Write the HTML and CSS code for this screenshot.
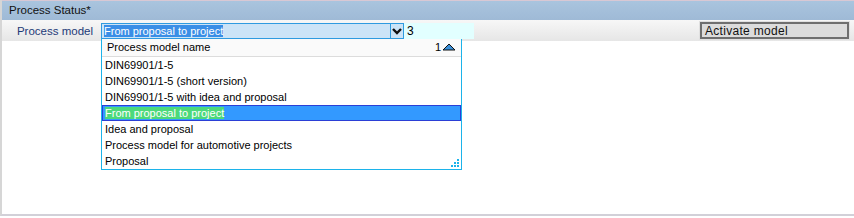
FILE: index.html
```html
<!DOCTYPE html>
<html lang="en">
  <head>
    <meta charset="UTF-8" />
    <title>Process Status</title>
    <link rel="stylesheet" href="styles.css">
  </head>
  <body>
    <div class="panel">
      <div class="panel-title">Process Status*</div>
      <div class="toolbar">
        <label class="field-label">Process model</label>
        <div class="combo">
          <div class="combo-input"><span class="sel">From proposal to project</span></div>
          <span class="combo-btn">
            <svg width="10" height="8" viewBox="0 0 10 8"><path d="M1 2 L5 6 L9 2" fill="none" stroke="#111" stroke-width="2.4"/></svg>
          </span>

          <div class="dropdown">
            <div class="dd-head">
              <span>Process model name</span>
              <span class="sort">1<svg width="14" height="8" viewBox="0 0 14 8"><path d="M1 7 L7 1 L13 7 Z" fill="#3a8fd8" stroke="#111" stroke-width="1"/></svg></span>
            </div>
            <ul class="dd-list">
              <li>DIN69901/1-5</li>
              <li>DIN69901/1-5 (short version)</li>
              <li>DIN69901/1-5 with idea and proposal</li>
              <li class="current"><span class="match">From proposal to project</span></li>
              <li>Idea and proposal</li>
              <li>Process model for automotive projects</li>
              <li>Proposal</li>
            </ul>
            <svg class="grip" width="8" height="8" viewBox="0 0 8 8">
              <rect x="6" y="0" width="2" height="2" fill="#1cb3ea"/>
              <rect x="3" y="3" width="2" height="2" fill="#1cb3ea"/>
              <rect x="6" y="3" width="2" height="2" fill="#1cb3ea"/>
              <rect x="0" y="6" width="2" height="2" fill="#1cb3ea"/>
              <rect x="3" y="6" width="2" height="2" fill="#1cb3ea"/>
              <rect x="6" y="6" width="2" height="2" fill="#1cb3ea"/>
            </svg>
          </div>
        </div>
        <div class="count">3</div>
        <div class="spacer"></div>
        <button class="btn">Activate model</button>
      </div>
      <div class="panel-body"></div>
    </div>
  </body>
</html>
```

FILE: styles.css
```css
body {
  margin: 0;
  background: #fff;
  font-family: "Liberation Sans", Arial, sans-serif;
}

.panel {
  height: 214px;
  border-left: 2px solid #d6d6d6;
  border-bottom: 2px solid #d2d0d8;
  display: flex;
  flex-direction: column;
}

.panel-title {
  height: 19px;
  border-top: 1px solid #d8c8d4;
  background: linear-gradient(#a9c4de, #9fbad6);
  color: #111;
  font-size: 11.5px;
  line-height: 19px;
  padding-left: 7px;
}

.toolbar {
  height: 21px;
  display: flex;
  align-items: center;
  background: linear-gradient(#f7f7f7, #e6e6e6);
  font-size: 11px;
}

.field-label {
  width: 99px;
  flex-shrink: 0;
  text-align: right;
  color: #1d3a78;
  font-size: 11.5px;
  padding-right: 8px;
  box-sizing: border-box;
}

.combo {
  position: relative;
  display: flex;
  height: 16px;
  width: 303px;
}

.combo-input {
  flex: 1;
  background: #cce4f7;
  border: 1px solid #2f9be0;
  border-right: none;
  padding-left: 2px;
  line-height: 14px;
  font-size: 11px;
}

.combo-input .sel {
  background: #3a8ee6;
  color: #fff;
}

.combo-btn {
  width: 12px;
  border: 1px solid #2f9be0;
  background: #cce4f7;
  display: flex;
  align-items: center;
  justify-content: center;
}

.count {
  width: 70px;
  height: 16px;
  background: #e2ffff;
  line-height: 16px;
  padding-left: 3px;
  box-sizing: border-box;
  font-size: 12px;
}

.spacer {
  flex: 1;
}

.btn {
  width: 149px;
  height: 17px;
  margin-right: 5px;
  border: 2px solid #6f6f6f;
  outline: 1px solid #e0e0e0;
  background: #dcdcdc;
  font-family: inherit;
  font-size: 12px;
  letter-spacing: 0.3px;
  text-align: left;
  padding: 0 0 0 3px;
  color: #111;
}

.dropdown {
  position: absolute;
  top: 16px;
  left: 0;
  width: 361px;
  background: #fff;
  border: 1px solid #1cb3ea;
  border-top: none;
  box-sizing: border-box;
}

.dd-head {
  height: 17px;
  display: flex;
  justify-content: space-between;
  align-items: center;
  background: #fafafa;
  border-bottom: 1px solid #dcdcdc;
  padding: 0 5px 0 5px;
  font-size: 11px;
}

.dd-head .sort svg {
  margin-left: 1px;
}

.dd-list {
  list-style: none;
  margin: 0;
  padding: 0;
  font-size: 11px;
}

.dd-list li {
  height: 16px;
  line-height: 16px;
  padding-left: 3px;
}

.dd-list li.current {
  background: #3399ff;
  outline: 1px solid #2b3fd6;
  outline-offset: -1px;
}

.dd-list .match {
  background: #4cd97b;
  color: #fff;
}

.grip {
  position: absolute;
  right: 2px;
  bottom: 2px;
}

.panel-body {
  flex: 1;
}
```
